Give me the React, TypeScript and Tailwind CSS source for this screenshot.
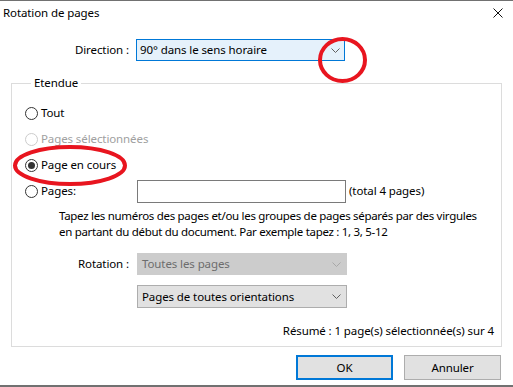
import React from 'react';

function Radio({ checked = false, disabled = false }: { checked?: boolean; disabled?: boolean }) {
  return (
    <span
      className={`flex h-[13px] w-[13px] shrink-0 items-center justify-center rounded-full border bg-white ${
        disabled ? 'border-[#cccccc]' : 'border-[#333333]'
      }`}
    >
      {checked && <span className="h-[7px] w-[7px] rounded-full bg-[#333333]" />}
    </span>
  );
}

function Chevron({ color = '#606060' }: { color?: string }) {
  return (
    <svg width="9" height="5" viewBox="0 0 9 5" className="shrink-0">
      <path d="M0.5 0.5 L4.5 4.5 L8.5 0.5" fill="none" stroke={color} strokeWidth="1" />
    </svg>
  );
}

export default function App() {
  return (
    <div
      className="relative h-[387px] w-[513px] overflow-hidden border-t border-b-2 border-[#717171] bg-white text-[11.5px] leading-[16px] tracking-[-0.1px] text-black"
      style={{ fontFamily: '"Noto Sans", "Liberation Sans", sans-serif' }}
    >
      {/* title bar */}
      <div className="flex h-[24px] items-center justify-between pl-[3px] pr-[10px]">
        <span>Rotation de pages</span>
        <svg width="10" height="10" viewBox="0 0 10 10">
          <path d="M0.5 0.5 L9.5 9.5 M9.5 0.5 L0.5 9.5" stroke="#111" strokeWidth="1" />
        </svg>
      </div>

      {/* direction */}
      <div className="mt-[14px] flex items-center">
        <span className="w-[129px] text-right">Direction :</span>
        <div className="ml-[7px] flex h-[22px] w-[209px] items-center justify-between border border-[#0078d7] bg-[#e5f1fb] pl-[3px] pr-[4px]">
          <span>90° dans le sens horaire</span>
          <Chevron />
        </div>
      </div>

      {/* group box */}
      <fieldset className="mx-[11px] mt-[14px] border border-[#dcdcdc] pb-[7px] pl-[13px] pr-[7px] pt-[9px]">
        <legend className="ml-[6px] px-[3px]">Etendue</legend>

        <div className="flex h-[26px] items-center gap-[3px]">
          <Radio />
          <span>Tout</span>
        </div>
        <div className="flex h-[26px] items-center gap-[3px] text-[#a0a0a0]">
          <Radio disabled />
          <span>Pages sélectionnées</span>
        </div>
        <div className="flex h-[26px] items-center gap-[3px]">
          <Radio checked />
          <span>Page en cours</span>
        </div>
        <div className="flex h-[26px] items-center">
          <div className="flex w-[112px] items-center gap-[3px]">
            <Radio />
            <span>Pages:</span>
          </div>
          <div className="h-[23px] w-[209px] border border-[#7a7a7a] bg-white" />
          <span className="ml-[3px]">(total 4 pages)</span>
        </div>

        <p className="mt-[4px] whitespace-nowrap pl-[34px] tracking-[-0.3px]">
          Tapez les numéros des pages et/ou les groupes de pages séparés par des virgules
          <br />
          en partant du début du document. Par exemple tapez : 1, 3, 5-12
        </p>

        <div className="mt-[13px] flex items-center">
          <span className="w-[104px] text-right">Rotation :</span>
          <div className="ml-[8px] flex h-[22px] w-[210px] items-center justify-between border border-[#cccccc] bg-[#cccccc] pl-[4px] pr-[5px] text-[#6d6d6d]">
            <span>Toutes les pages</span>
            <Chevron color="#a8a8a8" />
          </div>
        </div>
        <div className="ml-[112px] mt-[10px] flex h-[23px] w-[210px] items-center justify-between border border-[#adadad] bg-[#e1e1e1] pl-[4px] pr-[5px]">
          <span>Pages de toutes orientations</span>
          <Chevron />
        </div>

        <div className="mt-[15px] text-right">Résumé : 1 page(s) sélectionnée(s) sur 4</div>
      </fieldset>

      {/* buttons */}
      <div className="mt-[8px] flex justify-end gap-[11px] pr-[12px]">
        <button className="h-[25px] w-[97px] border-2 border-[#0078d7] bg-[#e1e1e1]">OK</button>
        <button className="h-[25px] w-[97px] border border-[#adadad] bg-[#e1e1e1]">Annuler</button>
      </div>

      {/* annotation marks */}
      <svg className="pointer-events-none absolute left-0 top-0" width="513" height="387">
        <ellipse cx="342.5" cy="59" rx="22.5" ry="21" fill="none" stroke="#e8151f" strokeWidth="4" />
        <ellipse cx="70" cy="164.5" rx="55" ry="18.5" fill="none" stroke="#e8151f" strokeWidth="4" />
      </svg>
    </div>
  );
}
